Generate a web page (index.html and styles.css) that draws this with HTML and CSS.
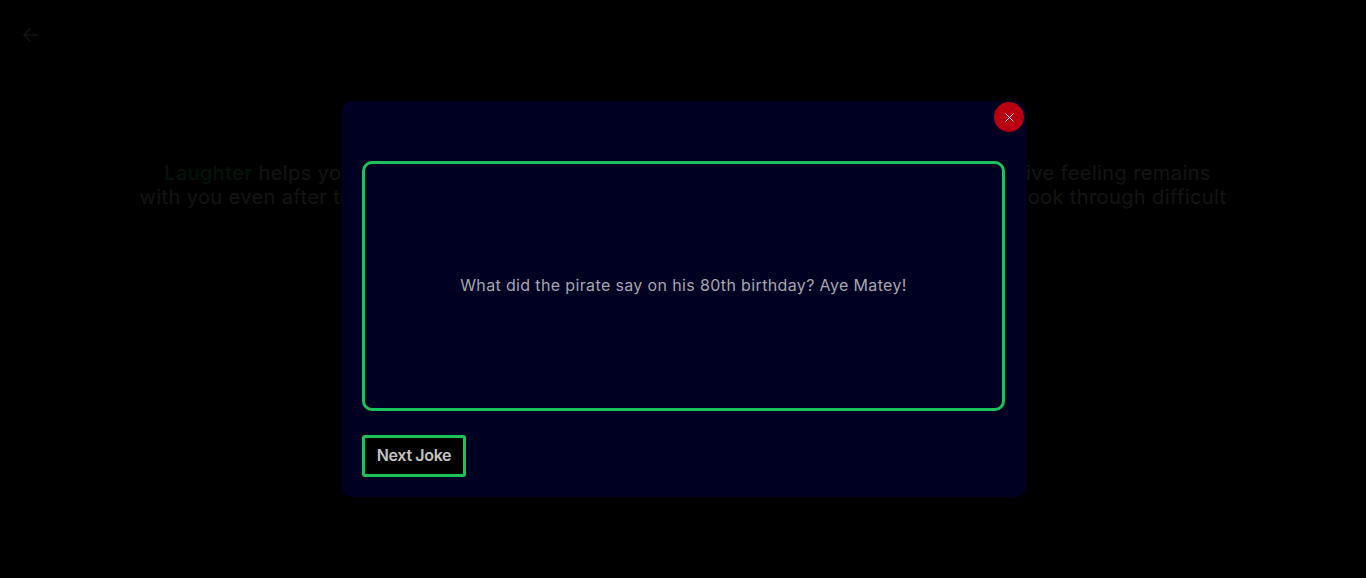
FILE: index.html
```html
<!DOCTYPE html>
<html lang="en">
<head>
    <meta charset="UTF-8">
    <meta name="viewport" content="width=device-width, initial-scale=1.0">
    <title>Laughter</title>
    <link rel="stylesheet" href="styles.css">
</head>
<body>
    <header class="top-bar">
        <a class="back" href="#" aria-label="Back">
            <svg width="18" height="18" viewBox="0 0 18 18" fill="none" stroke="currentColor" stroke-width="1.6">
                <path d="M16.5 9H2M8.5 2.5 2 9l6.5 6.5"/>
            </svg>
        </a>
    </header>
    <main class="content">
        <p class="intro">
            <span class="highlight">Laughter</span> helps you relax &amp; recharge. It reduces stress, and gives you energy. This positive feeling remains<br>
            with you even after the laughter subsides. Humor helps you keep a positive, optimistic outlook through difficult<br>
            situations, disappointments, and loss.
        </p>
    </main>

    <div class="overlay">
        <div class="modal">
            <button class="close" aria-label="Close">
                <svg width="9" height="9" viewBox="0 0 9 9" stroke="currentColor" stroke-width="1">
                    <path d="M.5.5l8 8M8.5.5l-8 8"/>
                </svg>
            </button>
            <div class="joke-box">
                <p class="joke">What did the pirate say on his 80th birthday? Aye Matey!</p>
            </div>
            <button class="next">Next Joke</button>
        </div>
    </div>
</body>
</html>
```

FILE: styles.css
```css
* {
    box-sizing: border-box;
}

body {
    font-family: Inter, "Open Sans", sans-serif;
    margin: 0;
    background-color: #000;
    color: #c4c4c4;
    height: 578px;
    overflow: hidden;
}

.top-bar {
    padding: 26px 22px 0;
    height: 161px;
}

.back {
    display: block;
    width: 18px;
    height: 18px;
    color: #c4c4c4;
}

.content {
    padding: 0 100px;
}

.intro {
    margin: 0;
    font-size: 20px;
    line-height: 24px;
    letter-spacing: 0.39px;
    text-align: center;
    white-space: nowrap;
}

.highlight {
    margin-left: 9px;
    color: #1ac45d;
    font-weight: 500;
}

.overlay {
    position: fixed;
    inset: 0;
    display: flex;
    align-items: center;
    justify-content: center;
    background-color: rgba(0, 0, 0, 0.9);
}

.modal {
    position: relative;
    width: 684px;
    height: 396px;
    margin: 20px 0 0 2px;
    padding: 60px 21px 20px 20px;
    background-color: #000022;
    border-radius: 10px;
}

.close {
    position: absolute;
    top: 1px;
    right: 2px;
    display: flex;
    align-items: center;
    justify-content: center;
    width: 30px;
    height: 30px;
    padding: 0;
    border: none;
    border-radius: 50%;
    background-color: #b90012;
    color: #e8e8e8;
    cursor: pointer;
}

.joke-box {
    display: flex;
    align-items: center;
    justify-content: center;
    height: 250px;
    padding-bottom: 2px;
    border: 3px solid #1ac45d;
    border-radius: 10px;
}

.joke {
    margin: 0;
    font-size: 16px;
    letter-spacing: 0.36px;
    color: #a6a6b0;
}

.next {
    display: block;
    width: 104px;
    height: 42px;
    margin-top: 24px;
    padding: 0 0 2px;
    border: 3px solid #1ac45d;
    border-radius: 3px;
    background-color: #000;
    color: #c4c4c4;
    font-family: inherit;
    font-size: 16px;
    font-weight: 600;
    letter-spacing: -0.35px;
    cursor: pointer;
}
```
